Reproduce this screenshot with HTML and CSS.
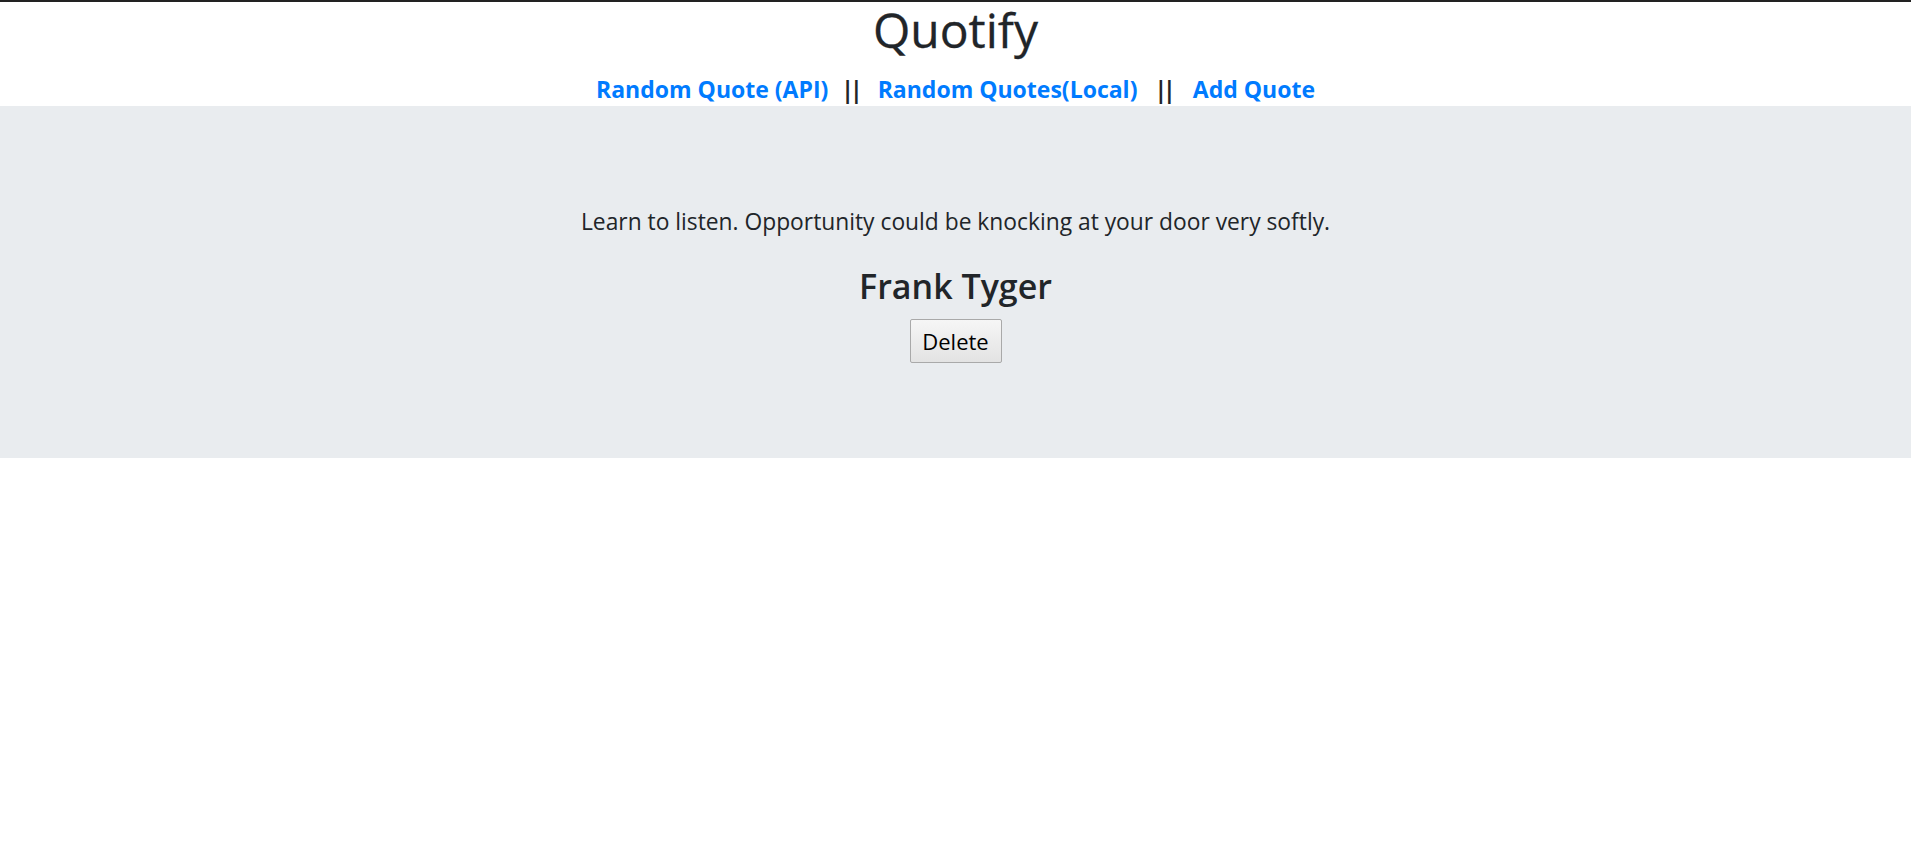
FILE: index.html
```html
<!DOCTYPE html>
<html lang="en">
<head>
<meta charset="utf-8">
<title>Quotify</title>
<link rel="stylesheet" href="styles.css">
</head>
<body>
<header class="header">
  <h1 class="title">Quotify</h1>
  <nav class="nav">
    <a class="nav-link" href="#">Random Quote (API)</a>
    <span class="sep">||</span>
    <a class="nav-link" href="#">Random Quotes(Local)</a>
    <span class="sep sep-2">||</span>
    <a class="nav-link" href="#">Add Quote</a>
  </nav>
</header>
<main class="jumbotron">
  <p class="quote">Learn to listen. Opportunity could be knocking at your door very softly.</p>
  <h2 class="author">Frank Tyger</h2>
  <button class="btn-delete" type="button">Delete</button>
</main>
</body>
</html>
```

FILE: styles.css
```css
html, body {
  margin: 0;
  padding: 0;
  background: #fff;
}
body {
  border-top: 2px solid #222;
  font-family: "Open Sans", "Noto Sans", sans-serif;
  color: #212529;
  text-align: center;
}
.header {
  display: flex;
  flex-direction: column;
  align-items: center;
}
.title {
  margin: 0;
  font-size: 48px;
  font-weight: 400;
  line-height: 56px;
  -webkit-text-stroke: 0.3px #212529;
}
.nav {
  display: flex;
  justify-content: center;
  align-items: baseline;
  box-sizing: border-box;
  height: 48px;
  padding: 20px 0 5px;
  line-height: 23px;
  font-size: 23px;
  font-weight: 700;
}
.nav-link {
  color: #007bff;
  text-decoration: none;
}
.sep {
  color: #212529;
  margin: 0 19px 0 13px;
  letter-spacing: -4px;
}
.sep-2 {
  margin: 0 21px 0 17px;
}
.jumbotron {
  background: #e9ecef;
  height: 352px;
  box-sizing: border-box;
  padding-top: 101px;
  display: flex;
  flex-direction: column;
  align-items: center;
}
.quote {
  margin: 0;
  font-size: 22.8px;
  line-height: 30px;
}
.author {
  margin: 29px 0 0;
  font-size: 34px;
  font-weight: 600;
  line-height: 40px;
}
.btn-delete {
  margin-top: 13px;
  width: 92px;
  height: 44px;
  font-family: inherit;
  font-size: 22px;
  color: #000;
  background: linear-gradient(#f6f6f6, #e3e3e3);
  border: 1px solid #a9a9a9;
  border-radius: 2px;
  padding: 0;
}
```
